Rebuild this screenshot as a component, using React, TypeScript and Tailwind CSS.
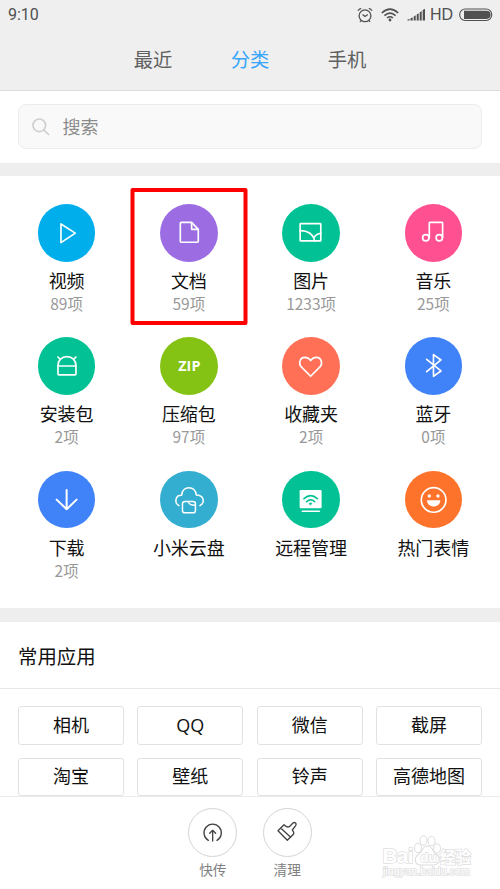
import type { ReactNode } from 'react';

interface Category {
    name: string;
    count?: string;
    color: string;
    icon: ReactNode;
    marked?: boolean;
}

// Category glyphs share one 173-unit canvas, three units to a pixel
const CATEGORIES: Category[] = [
    {
        name: '视频',
        count: '89项',
        color: 'bg-[#01aeec]',
        icon: <path d="M69 60V116L112 87.500Z" />,
    },
    {
        name: '文档',
        count: '59项',
        color: 'bg-[#9b6ce2]',
        marked: true,
        icon: (
            <>
                <path d="M64 55H95L115 76V112Q115 115 112 115H64Q61 115 61 112V58Q61 55 64 55Z" />
                <path d="M95 56V76H115" />
            </>
        ),
    },
    {
        name: '图片',
        count: '1233项',
        color: 'bg-[#02c295]',
        icon: (
            <>
                <rect x="54.500" y="59" width="62" height="52" rx="2" />
                <path d="M54 80C76 79 94 90 98 111M117 88C108 89 100 94 96 101" />
            </>
        ),
    },
    {
        name: '音乐',
        count: '25项',
        color: 'bg-[#ff5091]',
        icon: (
            <>
                <circle cx="62.500" cy="101.500" r="9.500" />
                <circle cx="103" cy="101.500" r="9.500" />
                <path d="M73 101V57Q73 55 75 55H111Q113 55 113 57V101" />
            </>
        ),
    },
    {
        name: '安装包',
        count: '2项',
        color: 'bg-[#02c295]',
        icon: (
            <>
                <path d="M60 111V86C60 70 71 59 87 59S114 70 114 86V111Q114 114 111 114H63Q60 114 60 111Z" />
                <path d="M60 87H114M60 60L67 67M114 60L107 67" />
            </>
        ),
    },
    {
        name: '压缩包',
        count: '97项',
        color: 'bg-[#84c213]',
        icon: (
            <text
                x="88"
                y="102"
                textAnchor="middle"
                textLength="67"
                fill="white"
                stroke="none"
                className="font-['Open_Sans',sans-serif] text-[43px] font-bold"
            >
                ZIP
            </text>
        ),
    },
    {
        name: '收藏夹',
        count: '2项',
        color: 'bg-[#ff7057]',
        icon: (
            <path d="M86 118L58 90C49 80 53 61 69 61C78 61 83 66 86 71C89 66 94 61 103 61C119 61 123 80 114 90Z" />
        ),
    },
    {
        name: '蓝牙',
        count: '0项',
        color: 'bg-[#4083f8]',
        icon: <path d="M65 67L108 102L85.500 118V53L108 69L65 104" />,
    },
    {
        name: '下载',
        count: '2项',
        color: 'bg-[#4083f8]',
        icon: <path strokeWidth="6" d="M86 57V115M56 86L86 115L116 86" />,
    },
    {
        name: '小米云盘',
        color: 'bg-[#34aed0]',
        icon: (
            <g strokeWidth="4.500">
                <path d="M57 104C41 95 47 72 65 73C66 58 76 50 87 50S108 58 109 72C131 72 137 94 120 104" />
                <rect x="67.500" y="91.500" width="39" height="34" rx="7" />
                <path d="M85 92C87 100 91 103 106 103" />
            </g>
        ),
    },
    {
        name: '远程管理',
        color: 'bg-[#02c295]',
        icon: (
            <>
                <path
                    fill="white"
                    stroke="none"
                    d="M57 57H115Q119 57 119 61V109Q119 112 115 112H57Q53 112 53 109V61Q53 57 57 57Z"
                />
                <path d="M61 121H112" />
                <g className="stroke-[#02c295]">
                    <path d="M66 83Q86 65 106 83M74 92Q86 82 98 92" />
                    <path strokeWidth="2" className="fill-[#02c295]" d="M82 97Q86 94 90 97L86 102Z" />
                </g>
            </>
        ),
    },
    {
        name: '热门表情',
        color: 'bg-[#fd732b]',
        icon: (
            <>
                <circle cx="86" cy="87" r="37" />
                <g fill="white" stroke="none">
                    <circle cx="73" cy="75" r="5" />
                    <circle cx="99" cy="75" r="5" />
                    <path d="M66 88H106C106 113 66 113 66 88Z" />
                </g>
            </>
        ),
    },
];

const APPS = ['相机', 'QQ', '微信', '截屏', '淘宝', '壁纸', '铃声', '高德地图'];

function StatusBar() {
    return (
        <div className="flex h-[29px] items-center pr-[7px] pl-[8px] text-[#505050]">
            <span className="font-[Roboto,sans-serif] text-[16px]">9:10</span>
            <svg className="ml-auto" width="16" height="16" viewBox="0 0 16 16" fill="none" stroke="currentColor" strokeWidth="1.300">
                <circle cx="8" cy="8.800" r="5.900" />
                <path d="M5.500 7.600L8 9.500L10.800 7.500M1 3.700Q2 1.800 4.200 1.400M15 3.700Q14 1.800 11.800 1.400M4 13.500L3 15M12 13.500L13 15" />
            </svg>
            <svg className="ml-[8px]" width="18" height="14" viewBox="0 0 18 14" fill="none" stroke="currentColor" strokeWidth="1.600">
                <path d="M.8 5Q9-2.600 17.200 5M3.400 7.700Q9 2.600 14.600 7.700M6 10Q9 7.600 12 10" />
                <circle cx="9" cy="12" r="1.400" fill="currentColor" stroke="none" />
            </svg>
            <svg className="ml-[8px]" width="19" height="13" viewBox="0 0 19 13" fill="currentColor">
                <path d="M.5 12.500V11.500L2.500 11V12.500ZM3.500 12.500V10.300L5.700 9.500V12.500ZM6.700 12.500V8.500L8.700 7.300V12.500ZM9.700 12.500V6.500L11.700 5.200V12.500ZM12.700 12.500V4.500L14.700 3V12.500ZM15.700 12.500V2L18 .8V12.500Z" />
            </svg>
            <span className="ml-[4px] font-['Liberation_Sans',sans-serif] text-[16px]">HD</span>
            <svg className="ml-[6px]" width="34" height="14" viewBox="0 0 34 14">
                <rect x=".7" y="1" width="32" height="11.500" rx="5.500" fill="none" stroke="currentColor" strokeWidth="1.100" />
                <path d="M5 2.700H27.500A4.100 4.100 0 0 1 27.500 10.900H5Z" fill="currentColor" />
            </svg>
        </div>
    );
}

function CategoryItem({ item }: { item: Category }) {
    return (
        <div className="relative flex flex-col items-center">
            <div className={`size-[57.600px] rounded-full ${item.color}`}>
                <svg
                    className="size-full"
                    viewBox="0 0 173 173"
                    fill="none"
                    stroke="white"
                    strokeWidth="5"
                    strokeLinecap="round"
                    strokeLinejoin="round"
                >
                    {item.icon}
                </svg>
            </div>
            <div className="mt-[6.500px] text-[18px] leading-6 whitespace-nowrap text-[#111]">{item.name}</div>
            {item.count && (
                <div className="text-[15.500px] leading-[22px] text-[#999]">{item.count}</div>
            )}
            {item.marked && (
                <div className="absolute -top-4 left-1/2 h-[137px] w-[117px] -translate-x-1/2 rounded-[2px] border-4 border-[#fe0000]" />
            )}
        </div>
    );
}

function BottomAction({ label, children }: { label: string; children: ReactNode }) {
    return (
        <div className="flex flex-col items-center">
            <div className="size-[49px] rounded-full border border-[#d4d4d4]">
                <svg
                    className="size-full"
                    viewBox="2 2 141 141"
                    fill="none"
                    stroke="#444"
                    strokeWidth="4"
                    strokeLinecap="round"
                    strokeLinejoin="round"
                >
                    {children}
                </svg>
            </div>
            <span className="mt-[2px] text-[13.700px] leading-5 text-[#808080]">{label}</span>
        </div>
    );
}

function Watermark() {
    return (
        <svg
            className="absolute right-[25px] bottom-[8px]"
            width="94"
            height="48"
            viewBox="0 0 94 48"
            fill="white"
            stroke="#e0e0e0"
            strokeWidth="1.500"
            paintOrder="stroke"
        >
            <text x="1.500" y="30" textLength="31" className="font-['Liberation_Sans',sans-serif] text-[21px] font-bold">
                Bai
            </text>
            <g stroke="#dcdcdc" strokeWidth="2">
                <ellipse cx="37" cy="15" rx="3" ry="4.300" />
                <ellipse cx="42.500" cy="7.500" rx="3" ry="4.300" />
                <ellipse cx="50.500" cy="8" rx="3" ry="4.300" />
                <ellipse cx="56" cy="15.500" rx="3" ry="4.300" />
                <path d="M46.500 13.500C51 13.500 51 18.500 55 21.500C60 25 58 31.500 52 31.500H40C34 31.500 33 25 38 21.500C42 18.500 42 13.500 46.500 13.500Z" />
            </g>
            <text x="39.500" y="28.500" className="font-['Liberation_Sans',sans-serif] text-[13px] font-bold">
                du
            </text>
            <text x="59" y="29.500" textLength="31" className="font-['Noto_Sans_CJK_SC',sans-serif] text-[15.500px] font-bold">
                经验
            </text>
            <text
                x="2"
                y="42"
                textLength="87"
                className="font-['Liberation_Sans',sans-serif] text-[11px]"
            >
                jingyan.baidu.com
            </text>
        </svg>
    );
}

export default function App() {
    return (
        <div className="relative flex h-[889px] w-[500px] flex-col overflow-hidden bg-white font-['Noto_Sans_CJK_SC',sans-serif]">
            <header className="h-[91px] shrink-0 border-b border-[#dcdcdc] bg-[#efefef]">
                <StatusBar />
                <nav className="flex h-[60px] items-center justify-center gap-[58.500px] text-[19.300px] text-[#606060]">
                    <span>最近</span>
                    <span className="text-[#36a5fb]">分类</span>
                    <span>手机</span>
                </nav>
            </header>

            <div className="h-[72px] shrink-0 px-[18px] pt-[13px]">
                <div className="flex h-[45px] items-center rounded-lg border border-[#ececec] bg-[#f9f9f9] pl-[13px] text-[#8c8c8c]">
                    <svg width="18" height="18" viewBox="0 0 18 18" fill="none" stroke="#cfcfcf" strokeWidth="1.700">
                        <circle cx="7.300" cy="7.300" r="6.300" />
                        <path d="M11.800 11.800L17 17" />
                    </svg>
                    <span className="ml-[12.500px] text-[18px]">搜索</span>
                </div>
            </div>

            {/* File categories */}
            <section className="h-[459px] shrink-0 border-t-[13px] border-b-[14px] border-[#eee] px-[5.500px] pt-[28px]">
                <div className="grid auto-rows-[133.400px] grid-cols-4">
                    {CATEGORIES.map(item => (
                        <CategoryItem key={item.name} item={item} />
                    ))}
                </div>
            </section>

            {/* Frequently used apps */}
            <section className="h-[174px] shrink-0 overflow-hidden">
                <h2 className="flex h-[67px] items-center border-b border-[#e8e8e8] pt-px pl-[18px] text-[19.400px] text-[#111]">
                    常用应用
                </h2>
                <div className="grid grid-cols-4 gap-x-[13.300px] gap-y-[13px] px-[18px] pt-[17px]">
                    {APPS.map(app => (
                        <div
                            key={app}
                            className="flex h-[38.500px] items-center justify-center rounded-[3px] border border-[#e2e2e2] font-['Open_Sans','Noto_Sans_CJK_SC',sans-serif] text-[18px] text-[#111]"
                        >
                            {app}
                        </div>
                    ))}
                </div>
            </section>

            <footer className="relative flex flex-1 justify-center gap-[25.300px] border-t border-[#ebebeb] bg-white pt-[11px]">
                <BottomAction label="快传">
                    <path d="M60 96A26 26 0 1 1 86 96M73 98V66M64 75L73 66L82 75" />
                </BottomAction>
                <BottomAction label="清理">
                    <path d="M62 49L44 67L72 96L91 77Q93 72 87 65L97 52C101 46 95 40 89 44L78 55Q70 59 62 49ZM52 59L82 87" />
                </BottomAction>
                <Watermark />
            </footer>
        </div>
    );
}
